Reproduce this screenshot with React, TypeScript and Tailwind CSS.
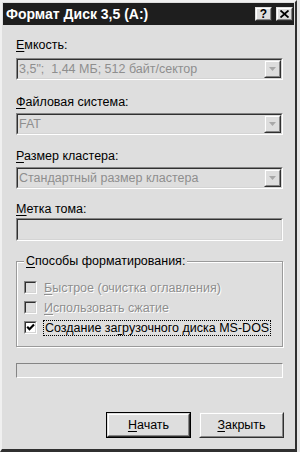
import React from "react";

const FONT = { fontFamily: '"Liberation Sans", Arial, sans-serif' };

function Raised({ children, className = "" }: { children?: React.ReactNode; className?: string }) {
  return (
    <div className={"border border-t-[#e0e0e0] border-l-[#e0e0e0] border-r-[#303030] border-b-[#303030] flex " + className}>
      <div className="flex-1 border border-t-white border-l-white border-r-[#858585] border-b-[#858585] flex items-center justify-center bg-[#dedede]">
        {children}
      </div>
    </div>
  );
}

function Sunken({ children, className = "", inner = "" }: { children?: React.ReactNode; className?: string; inner?: string }) {
  return (
    <div className={"border border-t-[#858585] border-l-[#858585] border-r-white border-b-white flex " + className}>
      <div className={"flex-1 border border-t-[#303030] border-l-[#303030] border-r-[#d4d4d4] border-b-[#d4d4d4] flex items-center " + inner}>
        {children}
      </div>
    </div>
  );
}

function Combo({ text }: { text: string }) {
  return (
    <Sunken className="h-[22px] w-[267px]" inner="bg-[#dedede]">
      <span className="pl-[1px] text-[12.5px] leading-[16px] text-[#8e8e8e] whitespace-pre">{text}</span>
      <Raised className="ml-auto w-[17px] h-full">
        <svg width="7" height="5" viewBox="0 0 7 5">
          <path d="M0 0h7L3.5 4z" fill="#a8a8a8" />
        </svg>
      </Raised>
    </Sunken>
  );
}

function Label({ first, rest, className = "" }: { first: string; rest: string; className?: string }) {
  return (
    <div className={"text-[12.5px] leading-[16px] text-black " + className}>
      <span className="underline decoration-1 underline-offset-[2px]">{first}</span>
      {rest}
    </div>
  );
}

function Check({ checked, disabled }: { checked?: boolean; disabled?: boolean }) {
  return (
    <Sunken className="w-[13px] h-[13px]" inner={disabled ? "bg-[#dedede]" : "bg-white"}>
      {checked && (
        <svg width="9" height="9" viewBox="0 0 9 9" className="mx-auto">
          <path d="M1.2 3.8l2.3 2.4 4.5-4.6" stroke="#000" strokeWidth="2.2" fill="none" />
        </svg>
      )}
    </Sunken>
  );
}

export default function App() {
  return (
    <div className="w-[300px] h-[452px] bg-[#e6e6e6] overflow-hidden" style={FONT}>
      <div className="w-[297px] h-[452px] bg-[#dedede] border-t-2 border-l-2 border-t-[#f0f0f0] border-l-[#f0f0f0] border-r-2 border-b-[3px] border-r-[#303030] border-b-[#303030] flex flex-col">
        {/* Title bar */}
        <div className="mt-[1px] mx-[1px] h-[22px] bg-[#1e1e1e] flex items-center pl-[3px] pr-[1px]">
          <span className="text-white font-bold text-[14px] leading-[16px] whitespace-pre">Формат Диск 3,5 (A:)</span>
          <div className="ml-auto flex gap-[4px]">
            <Raised className="w-[17px] h-[14px]">
              <span className="text-black font-bold text-[12px] leading-[12px]">?</span>
            </Raised>
            <Raised className="w-[17px] h-[14px]">
              <svg width="9" height="8" viewBox="0 0 9 8">
                <path d="M0.5 0.5l8 7M8.5 0.5l-8 7" stroke="#000" strokeWidth="1.8" />
              </svg>
            </Raised>
          </div>
        </div>

        <div className="flex flex-col pl-[14px] pr-[12px]">
          <Label first="Е" rest="мкость:" className="mt-[12px]" />
          <div className="mt-[5px]">
            <Combo text={'3,5";  1,44 МБ; 512 байт/сектор'} />
          </div>

          <Label first="Ф" rest="айловая система:" className="mt-[14px]" />
          <div className="mt-[3px]">
            <Combo text="FAT" />
          </div>

          <Label first="Р" rest="азмер кластера:" className="mt-[13px]" />
          <div className="mt-[3px]">
            <Combo text="Стандартный размер кластера" />
          </div>

          <Label first="М" rest="етка тома:" className="mt-[12px]" />
          <div className="mt-[1px]">
            <Sunken className="h-[23px] w-[267px]" inner="bg-[#dedede]" />
          </div>

          {/* Group box */}
          <div className="relative mt-[20px] w-[267px] h-[86px] border border-[#9a9a9a] shadow-[inset_1px_1px_0_#fff,1px_1px_0_#fff] pt-[19px] pl-[7px] flex flex-col gap-[7px]">
            <div className="absolute left-[7px] top-[-9px] bg-[#dedede] px-[2px] text-[12.5px] leading-[16px] text-black">
              <span className="underline decoration-1 underline-offset-[2px]">С</span>пособы форматирования:
            </div>
            <div className="flex items-center h-[13px]">
              <Check disabled />
              <span className="ml-[7px] text-[12.5px] leading-[16px] text-[#8e8e8e] [text-shadow:1px_1px_0_#fff]">
                <span className="underline decoration-1 underline-offset-[2px]">Б</span>ыстрое (очистка оглавления)
              </span>
            </div>
            <div className="flex items-center h-[13px]">
              <Check disabled />
              <span className="ml-[7px] text-[12.5px] leading-[16px] text-[#8e8e8e] [text-shadow:1px_1px_0_#fff]">
                <span className="underline decoration-1 underline-offset-[2px]">И</span>спользовать сжатие
              </span>
            </div>
            <div className="flex items-center h-[13px]">
              <Check checked />
              <span className="ml-[6px] px-[1px] border border-dotted border-black text-[12.5px] leading-[14px] text-black">
                Создание за<span className="underline decoration-1 underline-offset-[2px]">г</span>рузочного диска MS-DOS
              </span>
            </div>
          </div>

          {/* Progress */}
          <div className="mt-[16px] w-[267px] h-[15px] border border-t-[#858585] border-l-[#858585] border-r-white border-b-white" />

          {/* Buttons */}
          <div className="mt-[34px] flex justify-end gap-[8px] mr-[-1px]">
            <div className="border border-black flex">
              <Raised className="w-[83px] h-[24px]">
                <span className="text-[12.5px] leading-[16px] text-black">
                  <span className="underline decoration-1 underline-offset-[2px]">Н</span>ачать
                </span>
              </Raised>
            </div>
            <Raised className="w-[85px] h-[26px]">
              <span className="text-[12.5px] leading-[16px] text-black">
                <span className="underline decoration-1 underline-offset-[2px]">З</span>акрыть
              </span>
            </Raised>
          </div>
        </div>
      </div>
    </div>
  );
}
